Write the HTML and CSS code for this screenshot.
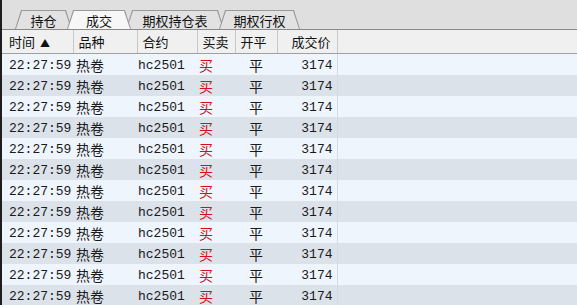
FILE: index.html
```html
<!DOCTYPE html>
<html lang="zh-CN">
<head>
    <meta charset="UTF-8">
    <title>成交</title>
    <link rel="stylesheet" href="styles.css">
</head>
<body>
    <div class="window">
        <div class="tab-bar">
            <div class="tab tab-pos"><div class="tab-inner">持仓</div></div>
            <div class="tab tab-deal active"><div class="tab-inner">成交</div></div>
            <div class="tab tab-opt"><div class="tab-inner">期权持仓表</div></div>
            <div class="tab tab-ex"><div class="tab-inner">期权行权</div></div>
        </div>

        <table class="deals">
            <colgroup>
                <col class="c-time">
                <col class="c-kind">
                <col class="c-code">
                <col class="c-side">
                <col class="c-open">
                <col class="c-price">
                <col>
            </colgroup>
            <thead>
                <tr>
                    <th class="left first">时间 <span class="sort">▲</span></th>
                    <th class="left">品种</th>
                    <th class="left">合约</th>
                    <th class="left">买卖</th>
                    <th class="left">开平</th>
                    <th class="right">成交价</th>
                    <th class="filler"></th>
                </tr>
            </thead>
            <tbody id="rows"></tbody>
        </table>
    </div>

    <script>
        let rows = document.getElementById('rows');
        for (let i = 0; i < 12; i++) {
            let tr = document.createElement('tr');
            tr.innerHTML =
                '<td class="num">22:27:59</td>' +
                '<td class="cjk kind">热卷</td>' +
                '<td class="num code">hc2501</td>' +
                '<td class="cjk buy">买</td>' +
                '<td class="cjk center">平</td>' +
                '<td class="num right price">3174</td>' +
                '<td class="filler"></td>';
            rows.appendChild(tr);
        }
    </script>
</body>
</html>
```

FILE: styles.css
```css
body {
    margin: 0;
    background: #dfdfdf;
    font-family: "Noto Sans CJK SC", "Noto Sans", sans-serif;
    overflow: hidden;
}

.window {
    height: 305px;
    border-left: 2px solid #1e1e1e;
    background: #eef4fc;
    overflow: hidden;
}

/* tabs */
.tab-bar {
    display: flex;
    align-items: flex-end;
    height: 29px;
    padding-left: 13px;
    background: #dfdfdf;
    border-bottom: 1px solid #8a8a8a;
}

.tab {
    height: 18px;
    padding: 1px 1px 0;
    margin-right: -5px;
    background: #9a9a9a;
    clip-path: polygon(0 100%, 6px 0, calc(100% - 6px) 0, 100% 100%);
}

.tab-inner {
    height: 100%;
    background: #e2e2e2;
    clip-path: polygon(0 100%, 6px 0, calc(100% - 6px) 0, 100% 100%);
    font-size: 13px;
    line-height: 19px;
    color: #111;
    text-align: center;
}

.tab.active {
    position: relative;
    z-index: 1;
}

.tab.active .tab-inner {
    background: #f7f7f7;
}

.tab-pos { width: 55px; }
.tab-deal { width: 62px; }
.tab-opt { width: 96px; }
.tab-ex { width: 79px; }

/* table */
.deals {
    border-collapse: collapse;
    table-layout: fixed;
    width: 100%;
}

.c-time { width: 71px; }
.c-kind { width: 64px; }
.c-code { width: 60px; }
.c-side { width: 38px; }
.c-open { width: 42px; }
.c-price { width: 60px; }

.deals th {
    height: 23px;
    padding: 0 0 0 5px;
    background: #f0f0f0;
    border-bottom: 1px solid #a0a0a0;
    border-right: 1px solid #c8c8c8;
    font-size: 13px;
    font-weight: normal;
    color: #111;
    white-space: nowrap;
}

.deals th.first {
    padding-left: 7px;
}

.deals th.filler {
    border-right: none;
}

.sort {
    font-size: 10px;
    margin-left: 2px;
}

.left { text-align: left; }
.right { text-align: right; }
.center { text-align: center; }

.deals th.right {
    padding: 0 6px 0 0;
}

.deals td {
    height: 21px;
    padding: 0;
    white-space: nowrap;
    color: #1a1a1a;
}

.deals tbody tr:nth-child(odd) td { background: #eff5fd; }
.deals tbody tr:nth-child(even) td { background: #dce2ea; }

.deals td.num {
    font-family: "Liberation Mono", monospace;
    font-size: 13px;
    height: 18px;
    padding-top: 3px;
    line-height: 16px;
}

.deals td:first-child { padding-left: 7px; }

.deals td.cjk {
    font-size: 14px;
    line-height: 18px;
}

.deals td.kind { padding-left: 3px; }
.deals td.code { padding-left: 1px; }
.deals td.buy { color: #d0101a; padding-left: 2px; }
.deals td.price {
    padding-right: 4px;
    border-right: 1px solid #d4dbe4;
}
```
